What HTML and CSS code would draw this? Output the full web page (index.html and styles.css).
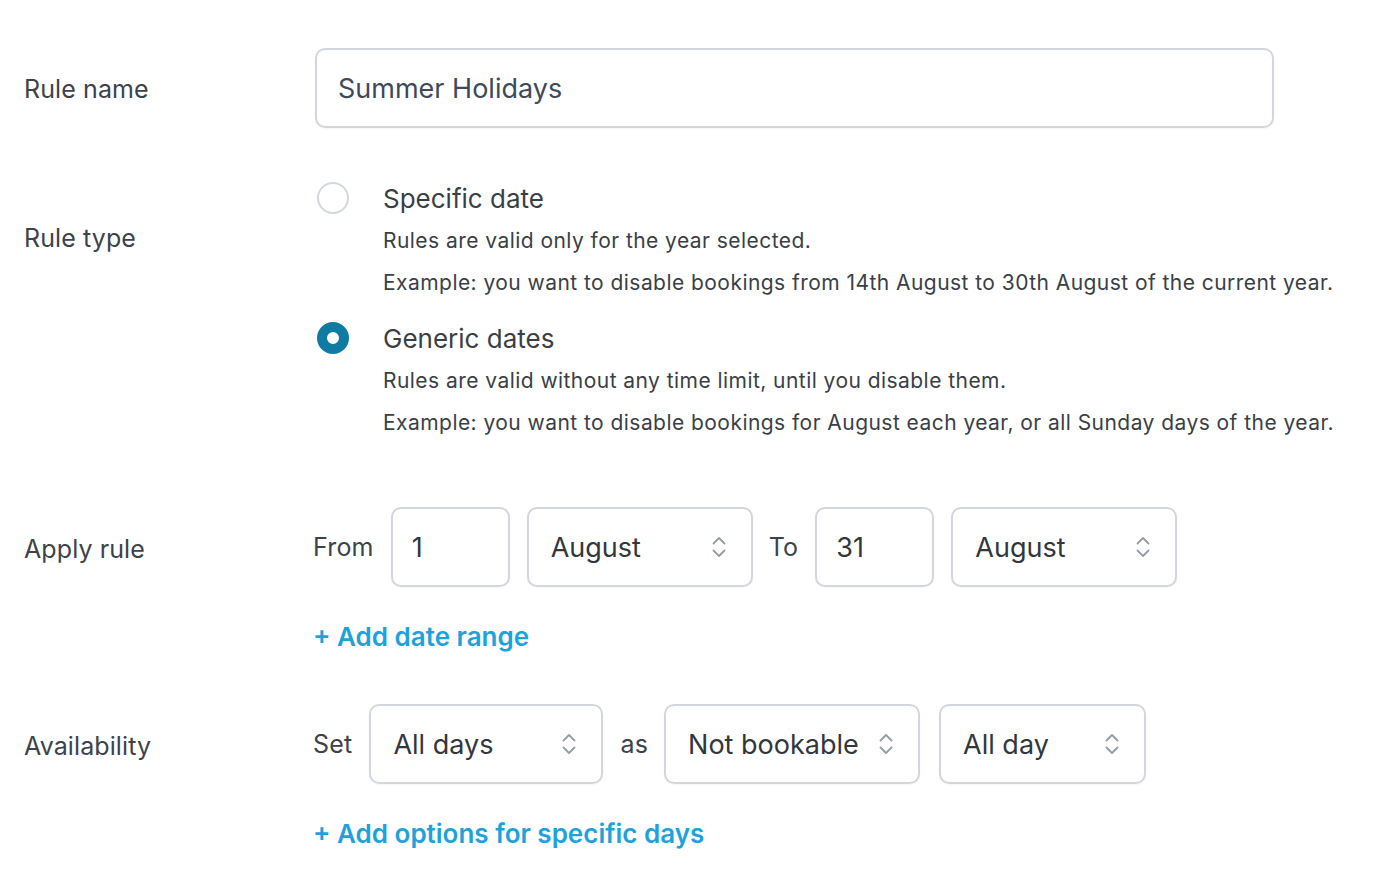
FILE: index.html
```
<!DOCTYPE html>
<html>
<head>
<meta charset="utf-8">
<link rel="stylesheet" href="styles.css">
</head>
<body>
<div class="form">
  <div class="row row-name">
    <div class="label">Rule name</div>
    <div class="field">
      <div class="input input-name">Summer Holidays</div>
    </div>
  </div>

  <div class="row row-type">
    <div class="label label-type">Rule type</div>
    <div class="field options">
      <div class="option">
        <span class="radio"></span>
        <div class="opt-body">
          <div class="opt-title">Specific date</div>
          <div class="opt-desc">Rules are valid only for the year selected.</div>
          <div class="opt-desc">Example: you want to disable bookings from 14th August to 30th August of the current year.</div>
        </div>
      </div>
      <div class="option">
        <span class="radio checked"></span>
        <div class="opt-body">
          <div class="opt-title">Generic dates</div>
          <div class="opt-desc">Rules are valid without any time limit, until you disable them.</div>
          <div class="opt-desc">Example: you want to disable bookings for August each year, or all Sunday days of the year.</div>
        </div>
      </div>
    </div>
  </div>

  <div class="row row-apply">
    <div class="label">Apply rule</div>
    <div class="field">
      <div class="inline">
        <span class="word w-from">From</span>
        <div class="box num">1</div>
        <div class="box select sel-month">August<svg class="chev" viewBox="0 0 16 24" width="16" height="24"><path d="M2.5 8.5 L8 3 L13.5 8.5 M2.5 15.5 L8 21 L13.5 15.5" fill="none" stroke="#959ca5" stroke-width="1.8" stroke-linecap="round" stroke-linejoin="round"/></svg></div>
        <span class="word w-to">To</span>
        <div class="box num">31</div>
        <div class="box select sel-month">August<svg class="chev" viewBox="0 0 16 24" width="16" height="24"><path d="M2.5 8.5 L8 3 L13.5 8.5 M2.5 15.5 L8 21 L13.5 15.5" fill="none" stroke="#959ca5" stroke-width="1.8" stroke-linecap="round" stroke-linejoin="round"/></svg></div>
      </div>
      <div class="link">+ Add date range</div>
    </div>
  </div>

  <div class="row row-avail">
    <div class="label">Availability</div>
    <div class="field">
      <div class="inline">
        <span class="word w-set">Set</span>
        <div class="box select sel-days">All days<svg class="chev" viewBox="0 0 16 24" width="16" height="24"><path d="M2.5 8.5 L8 3 L13.5 8.5 M2.5 15.5 L8 21 L13.5 15.5" fill="none" stroke="#959ca5" stroke-width="1.8" stroke-linecap="round" stroke-linejoin="round"/></svg></div>
        <span class="word w-as">as</span>
        <div class="box select sel-book">Not bookable<svg class="chev" viewBox="0 0 16 24" width="16" height="24"><path d="M2.5 8.5 L8 3 L13.5 8.5 M2.5 15.5 L8 21 L13.5 15.5" fill="none" stroke="#959ca5" stroke-width="1.8" stroke-linecap="round" stroke-linejoin="round"/></svg></div>
        <div class="box select sel-allday">All day<svg class="chev" viewBox="0 0 16 24" width="16" height="24"><path d="M2.5 8.5 L8 3 L13.5 8.5 M2.5 15.5 L8 21 L13.5 15.5" fill="none" stroke="#959ca5" stroke-width="1.8" stroke-linecap="round" stroke-linejoin="round"/></svg></div>
      </div>
      <div class="link">+ Add options for specific days</div>
    </div>
  </div>
</div>
</body>
</html>
```
FILE: styles.css
```
* { box-sizing: border-box; }
body {
  margin: 0;
  background: #ffffff;
  font-family: Inter, "Noto Sans", sans-serif;
  color: #3a3f46;
}
.form {
  padding: 48px 0 0 24px;
}
.row {
  display: flex;
}
.label {
  width: 291px;
  flex: none;
  font-size: 25px;
  letter-spacing: 0.1px;
  color: #3c434a;
}
.field {
  flex: 1;
}
.row-name .label {
  padding-top: 26px;
}
.input-name {
  width: 959px;
  height: 80px;
  border: 2px solid #d3d7dd;
  border-radius: 10px;
  padding: 0 21px;
  display: flex;
  align-items: center;
  font-size: 27px;
  color: #3e4a59;
  box-shadow: 0 1px 2px rgba(0,0,0,0.04);
}
.row-type {
  margin-top: 54px;
}
.label-type {
  padding-top: 41px;
}
.options {
  display: flex;
  flex-direction: column;
  gap: 27px;
}
.option {
  display: flex;
}
.radio {
  flex: none;
  width: 32px;
  height: 32px;
  border-radius: 50%;
  border: 2px solid #d3d8de;
  margin: 0 0 0 2px;
  position: relative;
}
.radio.checked {
  border: 10px solid #0f7ba3;
  background: #fff;
  margin-top: 0;
}
.opt-body {
  margin-left: 34px;
}
.opt-title {
  font-size: 26px;
  line-height: 34px;
  color: #3a3f46;
}
.opt-desc {
  font-size: 21px;
  letter-spacing: 0.45px;
  line-height: 24px;
  margin-top: 13px;
  color: #3a3f46;
}
.opt-desc + .opt-desc {
  margin-top: 18px;
}
.row-apply {
  margin-top: 72px;
}
.row-apply .label, .row-avail .label {
  padding-top: 27px;
}
.inline {
  display: flex;
  align-items: center;
  height: 80px;
  margin-left: -2px;
}
.word {
  font-size: 25px;
  letter-spacing: 0.2px;
  color: #3c434a;
}
.box {
  height: 80px;
  border: 2px solid #d3d7dd;
  border-radius: 10px;
  display: flex;
  align-items: center;
  padding: 0 22px;
  font-size: 27px;
  color: #32373c;
  box-shadow: 0 1px 2px rgba(0,0,0,0.04);
}
.select {
  justify-content: space-between;
  padding-right: 24px;
}
.chev { flex: none; }
.num { width: 119px; padding-left: 19px; }
.w-from { margin-right: 17px; }
.sel-month { width: 226px; margin-left: 17px; }
.w-to { margin: 0 17px 0 16px; }
.sel-days { width: 234px; margin-left: 17px; }
.w-as { margin: 0 16px 0 17px; }
.sel-book { width: 256px; padding-right: 24px; }
.sel-allday { width: 207px; margin-left: 19px; }
.link {
  font-size: 26px;
  font-weight: 600;
  color: #1ea2dc;
  margin-top: 34px;
  margin-left: -2px;
}
.row-avail {
  margin-top: 52px;
}
```
